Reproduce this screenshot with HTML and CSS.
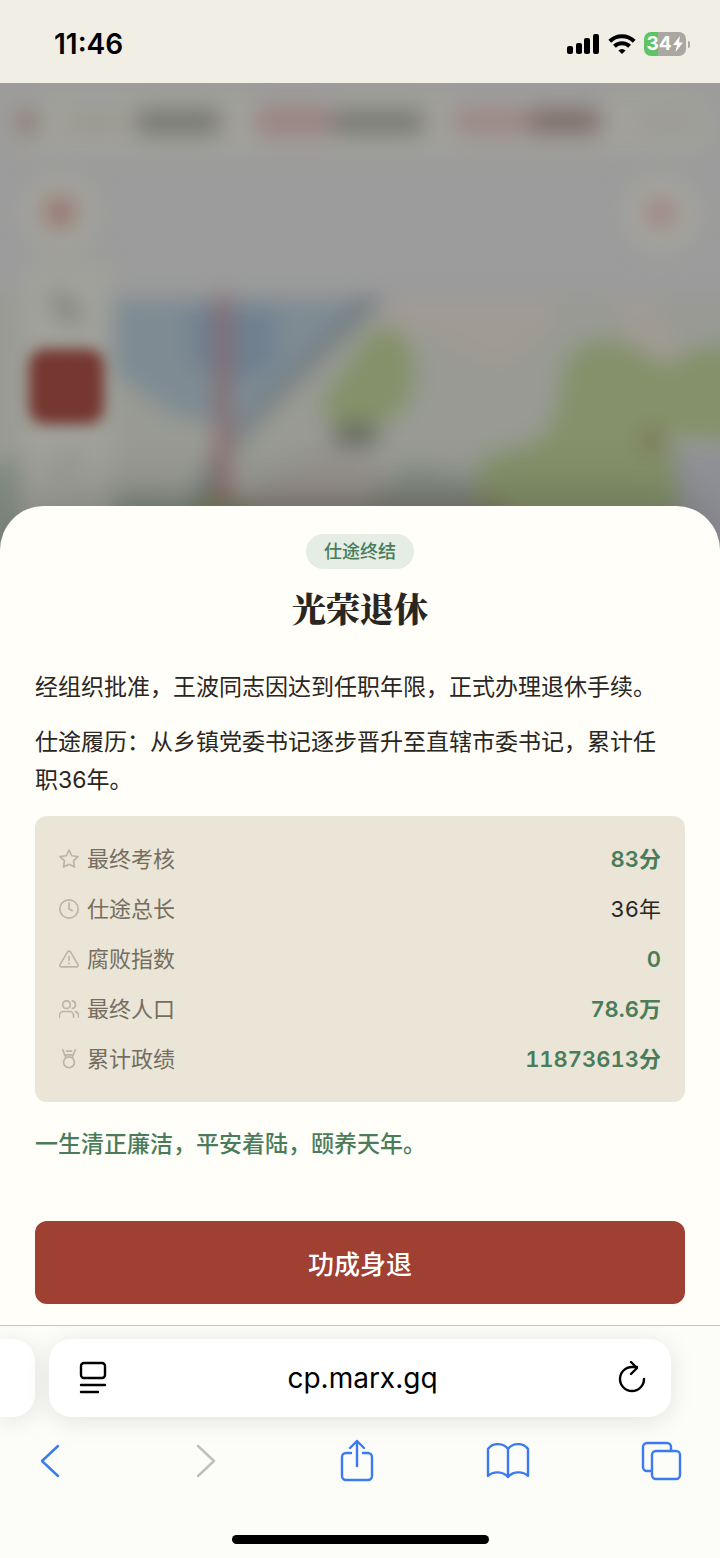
FILE: index.html
```html
<!DOCTYPE html>
<html lang="zh-CN">
<head>
  <meta charset="UTF-8" />
  <meta name="viewport" content="width=device-width, initial-scale=1.0"/>
  <title>光荣退休</title>
  <link rel="stylesheet" href="styles.css">
</head>
<body>
  <header class="status">
    <time class="clock">11:46</time>
    <div class="status-icons">
      <svg width="34" height="22" viewBox="0 0 34 22" aria-hidden="true">
        <rect x="1" y="13" width="6" height="8" rx="2"/>
        <rect x="10" y="10" width="6" height="11" rx="2"/>
        <rect x="18" y="5" width="6" height="16" rx="2"/>
        <rect x="27" y="1" width="6" height="20" rx="2"/>
      </svg>
      <svg width="28" height="22" viewBox="0 0 28 22" aria-hidden="true">
        <g fill="none" stroke="#000" stroke-width="4">
          <path d="M1.8 8.2a17.4 17.4 0 0 1 24.4 0"/>
          <path d="M6.4 13.2a11 11 0 0 1 15.2 0"/>
        </g>
        <path d="M14 21l-3.6-3.4a5 5 0 0 1 7.2 0z"/>
      </svg>
      <div class="battery">
        <span>34</span>
        <svg width="12" height="18" viewBox="0 0 12 18" aria-hidden="true"><path fill="#fff" d="M8 1L1 10h4L3.500 17 11 7.500H7z"/></svg>
      </div>
    </div>
  </header>

  <main class="stage">
    <svg class="map" viewBox="0 0 720 480" preserveAspectRatio="xMidYMin slice" aria-hidden="true">
      <g class="map-shapes">
        <rect x="-40" y="217" width="800" height="320" fill="#989a93"/>
        <path fill="#a09b94" d="M375 217h180v25l-55 45-70-35-55 5z"/>
        <path fill="#a09b94" d="M610 215h40l20 30 10 30-20 20-30-40z"/>
        <path fill="#828b82" d="M-40 390l60-15 60 40 80-5 40 20h140l70-45 120 20-20 120H-40z"/>
        <path fill="#919198" d="M670 365h80v120h-80z"/>
        <path fill="#96938e" d="M250 400l80-40 60 30-40 60h-90z"/>
        <path fill="#7e8b93" d="M108 215h280l-85 80-60 55-70-20-65-45z"/>
        <path fill="#70808f" d="M190 225h85v60l-40 15-45-20z"/>
        <path fill="#84916a" d="M385 242c20 5 32 30 28 60-6 30-40 48-64 46-20-4-26-18-26-30l42-62z"/>
        <path fill="#84916a" d="M605 258c28 0 46 20 65 25 20-20 40-20 90-20v92c-40 3-60 1-90-4 5 30 12 50 8 90H478v-55c6-18 40-18 60-28 20-20 22-40 24-60 2-26 20-40 43-40z"/>
        <path fill="#79865c" d="M185 417l30-12 30 20v20h-65z"/>
        <path fill="#727a7d" d="M382 214l-95 95-62 65-30 60h-14l34-62 62-70 88-90z"/>
        <path stroke="#8b6468" stroke-width="12" d="M223 212v215"/>
        <path stroke="#7a6d60" stroke-width="10" d="M215 424h290"/>
        <ellipse cx="356" cy="352" rx="24" ry="11" fill="#666862"/>
        <circle cx="652" cy="357" r="9" fill="#75654f"/>

        <rect x="6" y="13" width="708" height="56" rx="26" fill="#a1a19a"/>
        <rect x="17" y="27" width="20" height="24" rx="6" fill="#897773"/>
        <rect x="68" y="34" width="54" height="10" fill="#92928a"/>
        <rect x="136" y="27" width="84" height="24" rx="6" fill="#777771"/>
        <rect x="256" y="22" width="76" height="32" rx="8" fill="#9a8583"/>
        <rect x="332" y="27" width="92" height="24" rx="6" fill="#797973"/>
        <rect x="454" y="24" width="78" height="28" rx="8" fill="#9c8886"/>
        <rect x="530" y="25" width="70" height="26" rx="6" fill="#7f6e6b"/>
        <rect x="642" y="34" width="54" height="10" fill="#969690"/>

        <circle cx="60" cy="130" r="38" fill="#a3a39b"/>
        <circle cx="60" cy="129" r="15" fill="#976f6b"/>
        <circle cx="661" cy="130" r="38" fill="#a3a39b"/>
        <circle cx="661" cy="130" r="13" fill="#a07e7c"/>

        <rect x="20" y="178" width="93" height="320" rx="20" fill="#a0a19a"/>
        <path stroke="#777872" stroke-width="12" d="M55 213l22 24"/>
        <path stroke="#8f9189" stroke-width="9" d="M54 392l22-22"/>
      </g>
      <rect class="map-active" x="29" y="266" width="75" height="75" rx="16" fill="#753730"/>
    </svg>

    <section class="sheet">
      <div class="sheet-head">
        <span class="tag">仕途终结</span>
        <h1>光荣退休</h1>
      </div>

      <p>经组织批准，王波同志因达到任职年限，正式办理退休手续。</p>
      <p>仕途履历：从乡镇党委书记逐步晋升至直辖市委书记，累计任职36年。</p>

      <div class="stats">
        <table>
          <tbody>
            <tr>
              <th scope="row">
                <div class="label">
                  <svg class="icon" viewBox="0 0 24 24"><path d="M12 1.300l3.300 6.800 7.500 1-5.400 5.200 1.300 7.400L12 18.200l-6.700 3.500 1.300-7.400L1.200 9.100l7.500-1z"/></svg>
                  <span>最终考核</span>
                </div>
              </th>
              <td class="good">83分</td>
            </tr>
            <tr>
              <th scope="row">
                <div class="label">
                  <svg class="icon" viewBox="0 0 24 24"><circle cx="12" cy="12" r="11"/><path d="M12 5v7l4 2"/></svg>
                  <span>仕途总长</span>
                </div>
              </th>
              <td>36年</td>
            </tr>
            <tr>
              <th scope="row">
                <div class="label">
                  <svg class="icon" viewBox="0 0 24 24"><path d="M10.300 3.400L1.300 18.500A2 2 0 0 0 3 21.500h18a2 2 0 0 0 1.700-3L13.700 3.400a2 2 0 0 0-3.400 0zM12 9v4.500M12 17v.5"/></svg>
                  <span>腐败指数</span>
                </div>
              </th>
              <td class="good">0</td>
            </tr>
            <tr>
              <th scope="row">
                <div class="label">
                  <svg class="icon" viewBox="0 0 24 24"><path d="M17.500 22v-2a5 5 0 0 0-5-5h-7a5 5 0 0 0-5 5v2M23.500 22v-2a5 5 0 0 0-3.700-4.800M16 2.200a4.700 4.700 0 0 1 0 9.200"/><circle cx="9" cy="6.800" r="4.600"/></svg>
                  <span>最终人口</span>
                </div>
              </th>
              <td class="good">78.6万</td>
            </tr>
            <tr>
              <th scope="row">
                <div class="label">
                  <svg class="icon" viewBox="0 0 24 24"><circle cx="12" cy="16" r="6.500"/><path d="M4.500 1l3.700 9.500M19.500 1l-3.700 9.500M9 2.500h6M7.500 7h9"/></svg>
                  <span>累计政绩</span>
                </div>
              </th>
              <td class="good">11873613分</td>
            </tr>
          </tbody>
        </table>
      </div>

      <p class="verdict">一生清正廉洁，平安着陆，颐养天年。</p>
      <button class="confirm" type="button">功成身退</button>
    </section>
  </main>

  <footer class="browser">
    <div class="tabs">
      <div class="prev-tab"></div>
      <div class="address">
        <button type="button" aria-label="页面菜单">
          <svg width="28" height="34" viewBox="0 0 28 34"><rect x="2" y="2" width="24" height="15" rx="3"/><path d="M2 24h24M2 31h17"/></svg>
        </button>
        <input type="text" value="cp.marx.gq" aria-label="地址">
        <button type="button" aria-label="重新载入">
          <svg width="28" height="34" viewBox="0 0 28 34"><path d="M26 18a12 12 0 1 1-12-12h5M13 1l6 6-6 6"/></svg>
        </button>
      </div>
    </div>
    <nav class="tools">
      <button type="button" aria-label="后退"><svg width="44" height="44" viewBox="0 0 44 44"><path d="M30 7L14 22l16 15"/></svg></button>
      <button type="button" aria-label="前进" disabled><svg width="44" height="44" viewBox="0 0 44 44"><path d="M17 7l16 15-16 15"/></svg></button>
      <button type="button" aria-label="分享"><svg width="44" height="44" viewBox="0 0 44 44"><path d="M17 14h-5a4 4 0 0 0-4 4v19a4 4 0 0 0 4 4h22a4 4 0 0 0 4-4V18a4 4 0 0 0-4-4h-5M23 27V2M16 9l7-7 7 7"/></svg></button>
      <button type="button" aria-label="书签"><svg width="44" height="44" viewBox="0 0 44 44"><path d="M22 10C18 4 7 3 2 10v27c5-5 15-5 20 1 5-6 15-6 20-1V10C37 3 26 4 22 10zv28"/></svg></button>
      <button type="button" aria-label="标签页"><svg width="44" height="44" viewBox="0 0 44 44"><path d="M12 32H8a4 4 0 0 1-4-4V8a4 4 0 0 1 4-4h20a4 4 0 0 1 4 4v4"/><rect x="13" y="12" width="28" height="28" rx="4"/></svg></button>
    </nav>
    <div class="home-bar"></div>
  </footer>
</body>
</html>
```

FILE: styles.css
```css
* { box-sizing: border-box; }
body { margin: 0; min-height: 100vh; display: flex; flex-direction: column; font-family: Inter, "Noto Sans CJK SC", sans-serif; color: #2a2622; background: #fdfdf9; }
button, input { font: inherit; color: inherit; border: 0; background: none; padding: 0; margin: 0; }
h1, p { margin: 0; }

/* status bar */
.status { height: 83px; padding: 4px 30px 0 54px; display: flex; align-items: center; justify-content: space-between; background: #f1eee6; color: #000; }
.clock { font-size: 28px; font-weight: 600; }
.status-icons { display: flex; align-items: center; gap: 8px; }
.battery { position: relative; width: 42px; height: 24px; margin-right: 4px; border-radius: 7px; display: flex; align-items: center; justify-content: center; color: #fff; font-size: 19px; font-weight: 700; line-height: 24px; background: linear-gradient(90deg, #5fc466 34%, #aaa7a1 34%); }
.battery::after { content: ""; position: absolute; right: -4px; top: 9px; width: 2px; height: 7px; border-radius: 0 2px 2px 0; background: #aaa7a1; }

/* page behind the sheet */
.stage { flex: 1; position: relative; overflow: hidden; display: flex; flex-direction: column; justify-content: flex-end; background: #9c9c9c; }
.map { position: absolute; top: 0; left: 0; width: 100%; height: 480px; }
.map-shapes { fill: none; filter: blur(11px); }
.map-active { filter: blur(7px); }

/* sheet */
.sheet { position: relative; padding: 28px 35px 21px; border-radius: 44px 44px 0 0; background: #fffef9; box-shadow: 0 -8px 60px rgba(0,0,0,0.2); }
.sheet-head { display: flex; flex-direction: column; align-items: center; gap: 16px; margin-bottom: 37px; }
.tag { padding: 0 18px; border-radius: 18px; background: #e5ede5; color: #4a7c5a; font-size: 18px; font-weight: 500; line-height: 35px; }
h1 { font-family: "Noto Serif CJK SC", "Noto Serif SC", "Songti SC", "Noto Sans CJK SC", serif; font-size: 34px; font-weight: 900; line-height: 46px; }
.sheet p { padding-right: 10px; font-size: 23px; line-height: 38px; margin-bottom: 17px; }

.stats { padding: 18px 24px; border-radius: 12px; background: #eae5d6; }
.stats table { width: 100%; border-collapse: collapse; font-size: 22px; line-height: 30px; }
.stats tr { height: 50px; }
.stats th, .stats td { padding: 0; font-weight: 400; }
.stats td { text-align: right; font-variant-numeric: tabular-nums; }
.stats .good { color: #4a7c5a; font-weight: 600; }
.label { display: flex; align-items: center; gap: 8px; color: #756d60; }
.icon { width: 20px; height: 20px; fill: none; stroke: #bcb5a6; stroke-width: 2; stroke-linecap: round; stroke-linejoin: round; }

.sheet .verdict { margin: 23px 0 58px; color: #4a7c5a; font-weight: 500; }
.confirm { display: block; width: 100%; height: 83px; border-radius: 12px; background: #a04033; color: #fff; font-size: 26px; font-weight: 500; }

/* browser bar */
.browser { border-top: 1px solid #c5c5c0; background: #fcfcf8; color: #000; overflow: hidden; }
.tabs { display: flex; gap: 14px; padding: 13px 49px 0 0; }
.prev-tab { width: 35px; border-radius: 0 22px 22px 0; background: #fff; box-shadow: 0 4px 26px rgba(0,0,0,0.1); }
.address { flex: 1; height: 78px; padding: 0 25px 0 30px; display: flex; align-items: center; border-radius: 22px; background: #fff; box-shadow: 0 4px 26px rgba(0,0,0,0.1); }
.address input { flex: 1; min-width: 0; text-align: center; font-size: 28px; }
.address svg, .tools svg { display: block; fill: none; stroke: #000; stroke-width: 2.4; stroke-linecap: round; stroke-linejoin: round; }
.tools { display: flex; justify-content: space-between; padding: 22px 37px 0 28px; }
.tools svg { stroke: #3a7bf0; }
.tools :disabled svg { stroke: #bfbfbb; }
.home-bar { width: 257px; height: 9px; margin: 52px auto 14px; border-radius: 5px; background: #000; }
```
